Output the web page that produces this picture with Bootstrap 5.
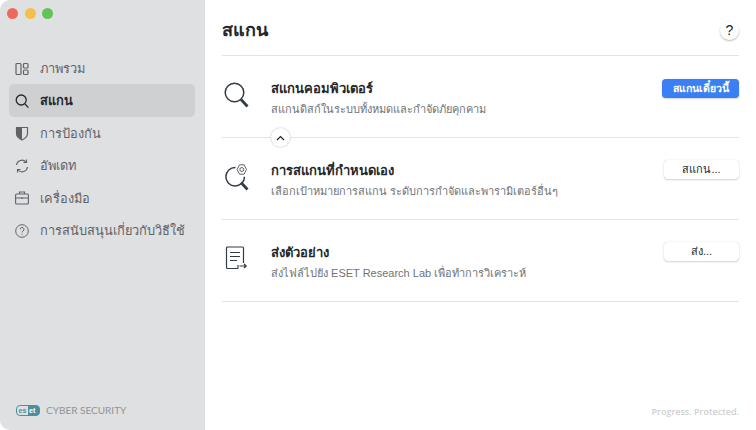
<!DOCTYPE html>
<html lang="th">
<head>
    <meta charset="UTF-8">
    <meta name="viewport" content="width=device-width, initial-scale=1.0">
    <title>ESET Cyber Security</title>
    <link href="https://cdn.jsdelivr.net/npm/bootstrap@5.3.0/dist/css/bootstrap.min.css" rel="stylesheet">
    <style>
        html, body { height: 100%; }
        body {
            font-family: "Liberation Sans", "Noto Sans", sans-serif;
            background: #fff;
            overflow: hidden;
        }
        .app-window { width: 756px; height: 430px; }
        .side-panel {
            width: 205px;
            background: #dfe0e2;
            border-radius: 10px 0 0 10px;
            padding: 8px 10px 12px 9px;
        }
        .traffic { gap: 6.5px; margin: 0 0 33px -2px; }
        .traffic span { width: 11px; height: 11px; border-radius: 50%; display: block; }
        .menu-entry {
            height: 33px;
            margin-bottom: -.6px;
            padding-left: 6px;
            gap: 11px;
            font-size: 12.8px;
            color: #5f6368;
            border-radius: 5px;
            white-space: nowrap;
        }
        .menu-entry.is-active { background: #cfd0d2; color: #25292e; }
        .menu-entry svg { width: 14px; height: 16px; flex: none; }
        .brand-line { font-family: Lato, sans-serif; font-size: 10px; color: #8f9396; padding-left: 7px; gap: 6px; }
        .main-panel { padding: 0 17px; }
        .top-bar { height: 56px; border-bottom: 1px solid #e3e3e3; padding-top: 5px; }
        .page-name { font-size: 18px; font-weight: 700; color: #23272b; }
        .help-dot {
            width: 19px; height: 19px; border-radius: 50%;
            background: #fff; box-shadow: 0 1px 2px rgba(0,0,0,.28);
            font-size: 14px; color: #222;
        }
        .task-row { height: 82px; border-bottom: 1px solid #e3e3e3; padding-top: 23px; }
        .task-icon { width: 49px; flex: none; padding-left: 2px; padding-top: 3px; }
        .task-name { font-size: 13px; font-weight: 700; color: #23272b; line-height: 20px; }
        .task-note { font-size: 11px; color: #6f7377; line-height: 18px; margin-top: 1px; }
        .act-btn {
            width: 75px; height: 19px; padding: 0; font-size: 11px; line-height: 19px;
            border: 0; border-radius: 4px; background: #fff; color: #25292e;
            box-shadow: 0 0 1px rgba(0,0,0,.22), 0 1px 2px rgba(0,0,0,.16);
            flex: none;
            margin-top: -1px;
        }
        .act-btn.act-main { width: 77px; background: #3b7ff5; color: #fff; font-weight: 700; font-size: 10.5px; margin-top: 0; }
        .collapse-dot {
            position: absolute; left: 49px; bottom: -10px;
            width: 19px; height: 19px; border-radius: 50%;
            background: #fff; box-shadow: 0 0 2px rgba(0,0,0,.3);
        }
        .slogan { font-family: "Open Sans", sans-serif; font-size: 9px; color: #d0d0d0; font-weight: 600; }
    </style>
</head>
<body>
    <div class="app-window d-flex">
        <aside class="side-panel d-flex flex-column">
            <div class="traffic d-flex">
                <span style="background:#ed6a5e"></span>
                <span style="background:#f5bf4f"></span>
                <span style="background:#61c554"></span>
            </div>
            <div class="menu-entry d-flex align-items-center">
                <svg viewBox="0 0 14 16" fill="none" stroke="currentColor" stroke-width="1.2"><rect x="1" y="2.500" width="5" height="11" rx="1"/><rect x="8.500" y="2.500" width="4.500" height="4.500" rx="1"/><rect x="8.500" y="9" width="4.500" height="4.500" rx="1"/></svg>
                <span>ภาพรวม</span>
            </div>
            <div class="menu-entry is-active d-flex align-items-center fw-semibold">
                <svg viewBox="0 0 14 16" fill="none" stroke="currentColor" stroke-width="1.3"><circle cx="6.200" cy="7" r="5"/><path d="M10 11l3.400 3.600"/></svg>
                <span>สแกน</span>
            </div>
            <div class="menu-entry d-flex align-items-center">
                <svg viewBox="0 0 14 16"><path d="M1.500 2.500h11v6c0 3-2.400 5-5.500 6.500-3.100-1.500-5.500-3.500-5.500-6.500z" fill="none" stroke="currentColor" stroke-width="1.200"/><path d="M1.500 2.500h5.500v12.500c-3.100-1.500-5.500-3.500-5.500-6.500z" fill="currentColor"/></svg>
                <span>การป้องกัน</span>
            </div>
            <div class="menu-entry d-flex align-items-center">
                <svg viewBox="0 0 14 16" fill="none" stroke="currentColor" stroke-width="1.100"><path d="M1.500 7a5.500 5.500 0 0 1 9.500-3"/><path d="M12.500 9a5.500 5.500 0 0 1-9.500 3"/><path d="M11.500 1.500V4.500H8.500M2.500 14.500V11.500H5.500"/></svg>
                <span>อัพเดท</span>
            </div>
            <div class="menu-entry d-flex align-items-center">
                <svg viewBox="0 0 14 16" fill="none" stroke="currentColor" stroke-width="1.100"><rect x=".6" y="4" width="12.800" height="10" rx="1"/><path d="M4.500 4V2h5v2M.6 8h12.800M7 7v2"/></svg>
                <span>เครื่องมือ</span>
            </div>
            <div class="menu-entry d-flex align-items-center">
                <svg viewBox="0 0 14 16" fill="none" stroke="currentColor" stroke-width="1"><circle cx="7" cy="8" r="6.300"/><path d="M5.200 6.400a1.900 1.900 0 1 1 2.800 1.600c-.7.400-1 .8-1 1.500M7 10.800v1"/></svg>
                <span>การสนับสนุนเกี่ยวกับวิธีใช้</span>
            </div>
            <div class="brand-line d-flex align-items-center mt-auto">
                <svg width="24" height="11" viewBox="0 0 24 11"><rect x=".5" y=".5" width="23" height="10" rx="3.500" fill="none" stroke="#4b8fa3"/><path d="M12 .5h8a3.500 3.500 0 0 1 3.500 3.500v3a3.500 3.500 0 0 1-3.500 3.500h-8z" fill="#4b8fa3"/><text x="2.500" y="8" font-family="Liberation Sans" font-weight="700" font-size="7" fill="#4b8fa3">es</text><text x="13" y="8" font-family="Liberation Sans" font-weight="700" font-size="7" fill="#fff">et</text></svg>
                <span>CYBER SECURITY</span>
            </div>
        </aside>
        <main class="main-panel flex-grow-1 d-flex flex-column">
            <div class="top-bar d-flex align-items-center justify-content-between">
                <div class="page-name">สแกน</div>
                <div class="help-dot d-flex align-items-center justify-content-center">?</div>
            </div>
            <div class="task-row position-relative d-flex align-items-start">
                <div class="task-icon">
                    <svg class="d-block" width="25" height="26" viewBox="0 0 25 26" fill="none" stroke="#333c44"><circle cx="10.500" cy="10.500" r="9.300" stroke-width="1.500"/><path d="M17 17.500l6.500 7" stroke-width="2.800"/></svg>
                </div>
                <div class="flex-grow-1">
                    <div class="task-name">สแกนคอมพิวเตอร์</div>
                    <div class="task-note">สแกนดิสก์ในระบบทั้งหมดและกำจัดภัยคุกคาม</div>
                </div>
                <button class="act-btn act-main" type="button">สแกนเดี๋ยวนี้</button>
                <div class="collapse-dot d-flex align-items-center justify-content-center">
                    <svg width="9" height="6" viewBox="0 0 9 6" fill="none" stroke="#222" stroke-width="1.200"><path d="M1 5l3.500-3.500L8 5"/></svg>
                </div>
            </div>
            <div class="task-row d-flex align-items-start">
                <div class="task-icon">
                    <svg class="d-block" width="25" height="27" viewBox="0 0 25 27" fill="none" stroke="#333c44"><path d="M11.500 3.400a9.300 9.300 0 1 0 9 9.300" stroke-width="1.500"/><path d="M17 18.500l6.500 7" stroke-width="2.800"/><path d="M15.500.8h4.600l2.400 4.700-2.400 4.700h-4.600l-2.400-4.700z" stroke-width=".8"/><circle cx="17.800" cy="5.500" r="2" stroke-width=".8"/></svg>
                </div>
                <div class="flex-grow-1">
                    <div class="task-name">การสแกนที่กำหนดเอง</div>
                    <div class="task-note">เลือกเป้าหมายการสแกน ระดับการกำจัดและพารามิเตอร์อื่นๆ</div>
                </div>
                <button class="act-btn" type="button">สแกน...</button>
            </div>
            <div class="task-row d-flex align-items-start">
                <div class="task-icon">
                    <svg class="d-block" width="25" height="24" viewBox="0 0 25 24" fill="none" stroke="#333c44" stroke-width="1.200"><path d="M14 22.500H3.500a1 1 0 0 1-1-1V2a1 1 0 0 1 1-1h15a1 1 0 0 1 1 1v15"/><path d="M6 6.500h10M6 10.500h10M6 14.500h7M14 22.500v-3.500"/><path d="M15.500 20h6.500M20 18l2.200 2-2.200 2"/></svg>
                </div>
                <div class="flex-grow-1">
                    <div class="task-name">ส่งตัวอย่าง</div>
                    <div class="task-note">ส่งไฟล์ไปยัง ESET Research Lab เพื่อทำการวิเคราะห์</div>
                </div>
                <button class="act-btn" type="button">ส่ง...</button>
            </div>
            <div class="slogan text-end mt-auto mb-2 pb-1">Progress. Protected.</div>
        </main>
    </div>
    <script src="https://cdn.jsdelivr.net/npm/bootstrap@5.3.0/dist/js/bootstrap.bundle.min.js"></script>
</body>
</html>
